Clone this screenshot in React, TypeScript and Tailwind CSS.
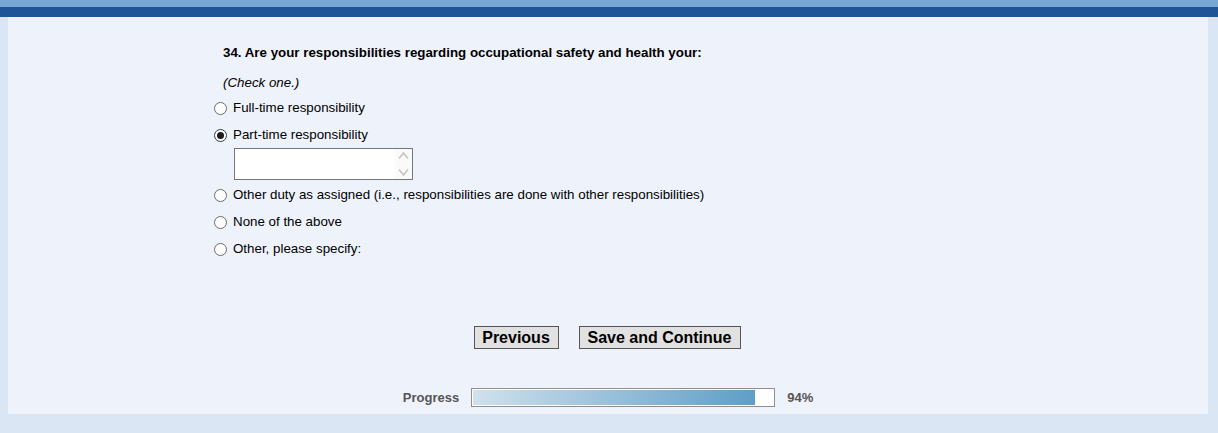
import { useState } from 'react';

const options = [
    'Full-time responsibility',
    'Part-time responsibility',
    'Other duty as assigned (i.e., responsibilities are done with other responsibilities)',
    'None of the above',
    'Other, please specify:',
];

function Radio({ checked }: { checked: boolean }) {
    return (
        <span
            className={`flex h-[13px] w-[13px] shrink-0 items-center justify-center rounded-full border bg-white ${checked ? 'border-[#2d3a4a]' : 'border-[#6b6b6b]'}`}
        >
            {checked && <span className="h-[7px] w-[7px] rounded-full bg-[#1c1c1c]" />}
        </span>
    );
}

export default function App() {
    const [selected, setSelected] = useState(1);
    const progress = 94;

    return (
        <div className="min-h-[433px] bg-[#dae6f3] font-['Liberation_Sans',Arial,sans-serif] text-black">
            {/* Top bars */}
            <div className="h-[7px] bg-[#78a6d6]" />
            <div className="h-[10px] bg-[#1f5597]" />

            <div className="pl-[8px] pr-[10px] pb-[19px]">
                <div className="flex h-[397px] flex-col bg-[#eef3fb]">
                    {/* Question */}
                    <div className="ml-[206px] pt-[28px]">
                        <p className="ml-[9px] text-[13.33px] font-bold leading-[16px]">
                            34. Are your responsibilities regarding occupational safety and health your:
                        </p>
                        <p className="ml-[9px] mt-[14px] text-[13.33px] italic leading-[16px]">(Check one.)</p>

                        <div className="mt-[7px] flex flex-col">
                            {options.map((label, i) => (
                                <div key={label}>
                                    <label
                                        className={`flex h-[20px] cursor-pointer items-center gap-[6px] text-[13.33px] ${i > 0 ? (i === 2 ? 'mt-[5px]' : 'mt-[7px]') : ''}`}
                                        onClick={() => setSelected(i)}
                                    >
                                        <Radio checked={selected === i} />
                                        <span>{label}</span>
                                    </label>
                                    {i === 1 && (
                                        <div className="ml-[20px] mt-[3px] flex h-[32px] w-[179px] border border-[#767676] bg-white">
                                            <div className="flex-1" />
                                            <div className="flex w-[17px] flex-col items-center justify-between bg-[#fafafa] py-[2px]">
                                                <svg width="11" height="9" viewBox="0 0 11 9" fill="none">
                                                    <path d="M1 7.5 L5.5 2 L10 7.5" stroke="#c4c4c4" strokeWidth="1.6" />
                                                </svg>
                                                <svg width="11" height="9" viewBox="0 0 11 9" fill="none">
                                                    <path d="M1 1.5 L5.5 7 L10 1.5" stroke="#c4c4c4" strokeWidth="1.6" />
                                                </svg>
                                            </div>
                                        </div>
                                    )}
                                </div>
                            ))}
                        </div>
                    </div>

                    {/* Buttons */}
                    <div className="mt-[67px] flex justify-center gap-[20px] pr-[2px]">
                        <button className="h-[23px] w-[85px] border border-[#555] bg-[#e1e1e1] text-[16px] font-bold leading-none">
                            Previous
                        </button>
                        <button className="h-[23px] w-[162px] border border-[#555] bg-[#e1e1e1] text-[16px] font-bold leading-none">
                            Save and Continue
                        </button>
                    </div>

                    {/* Progress */}
                    <div className="mt-[39px] flex items-center justify-center gap-[12px] text-[13px] font-bold text-[#555]">
                        <span>Progress</span>
                        <div className="h-[19px] w-[304px] border border-[#8f8f8f] bg-white p-[1px]">
                            <div
                                className="h-full bg-[linear-gradient(to_right,#cfe1ec,#5f9ec7)]"
                                style={{ width: `${progress}%` }}
                            />
                        </div>
                        <span>{progress}%</span>
                    </div>
                </div>
            </div>
        </div>
    );
}
